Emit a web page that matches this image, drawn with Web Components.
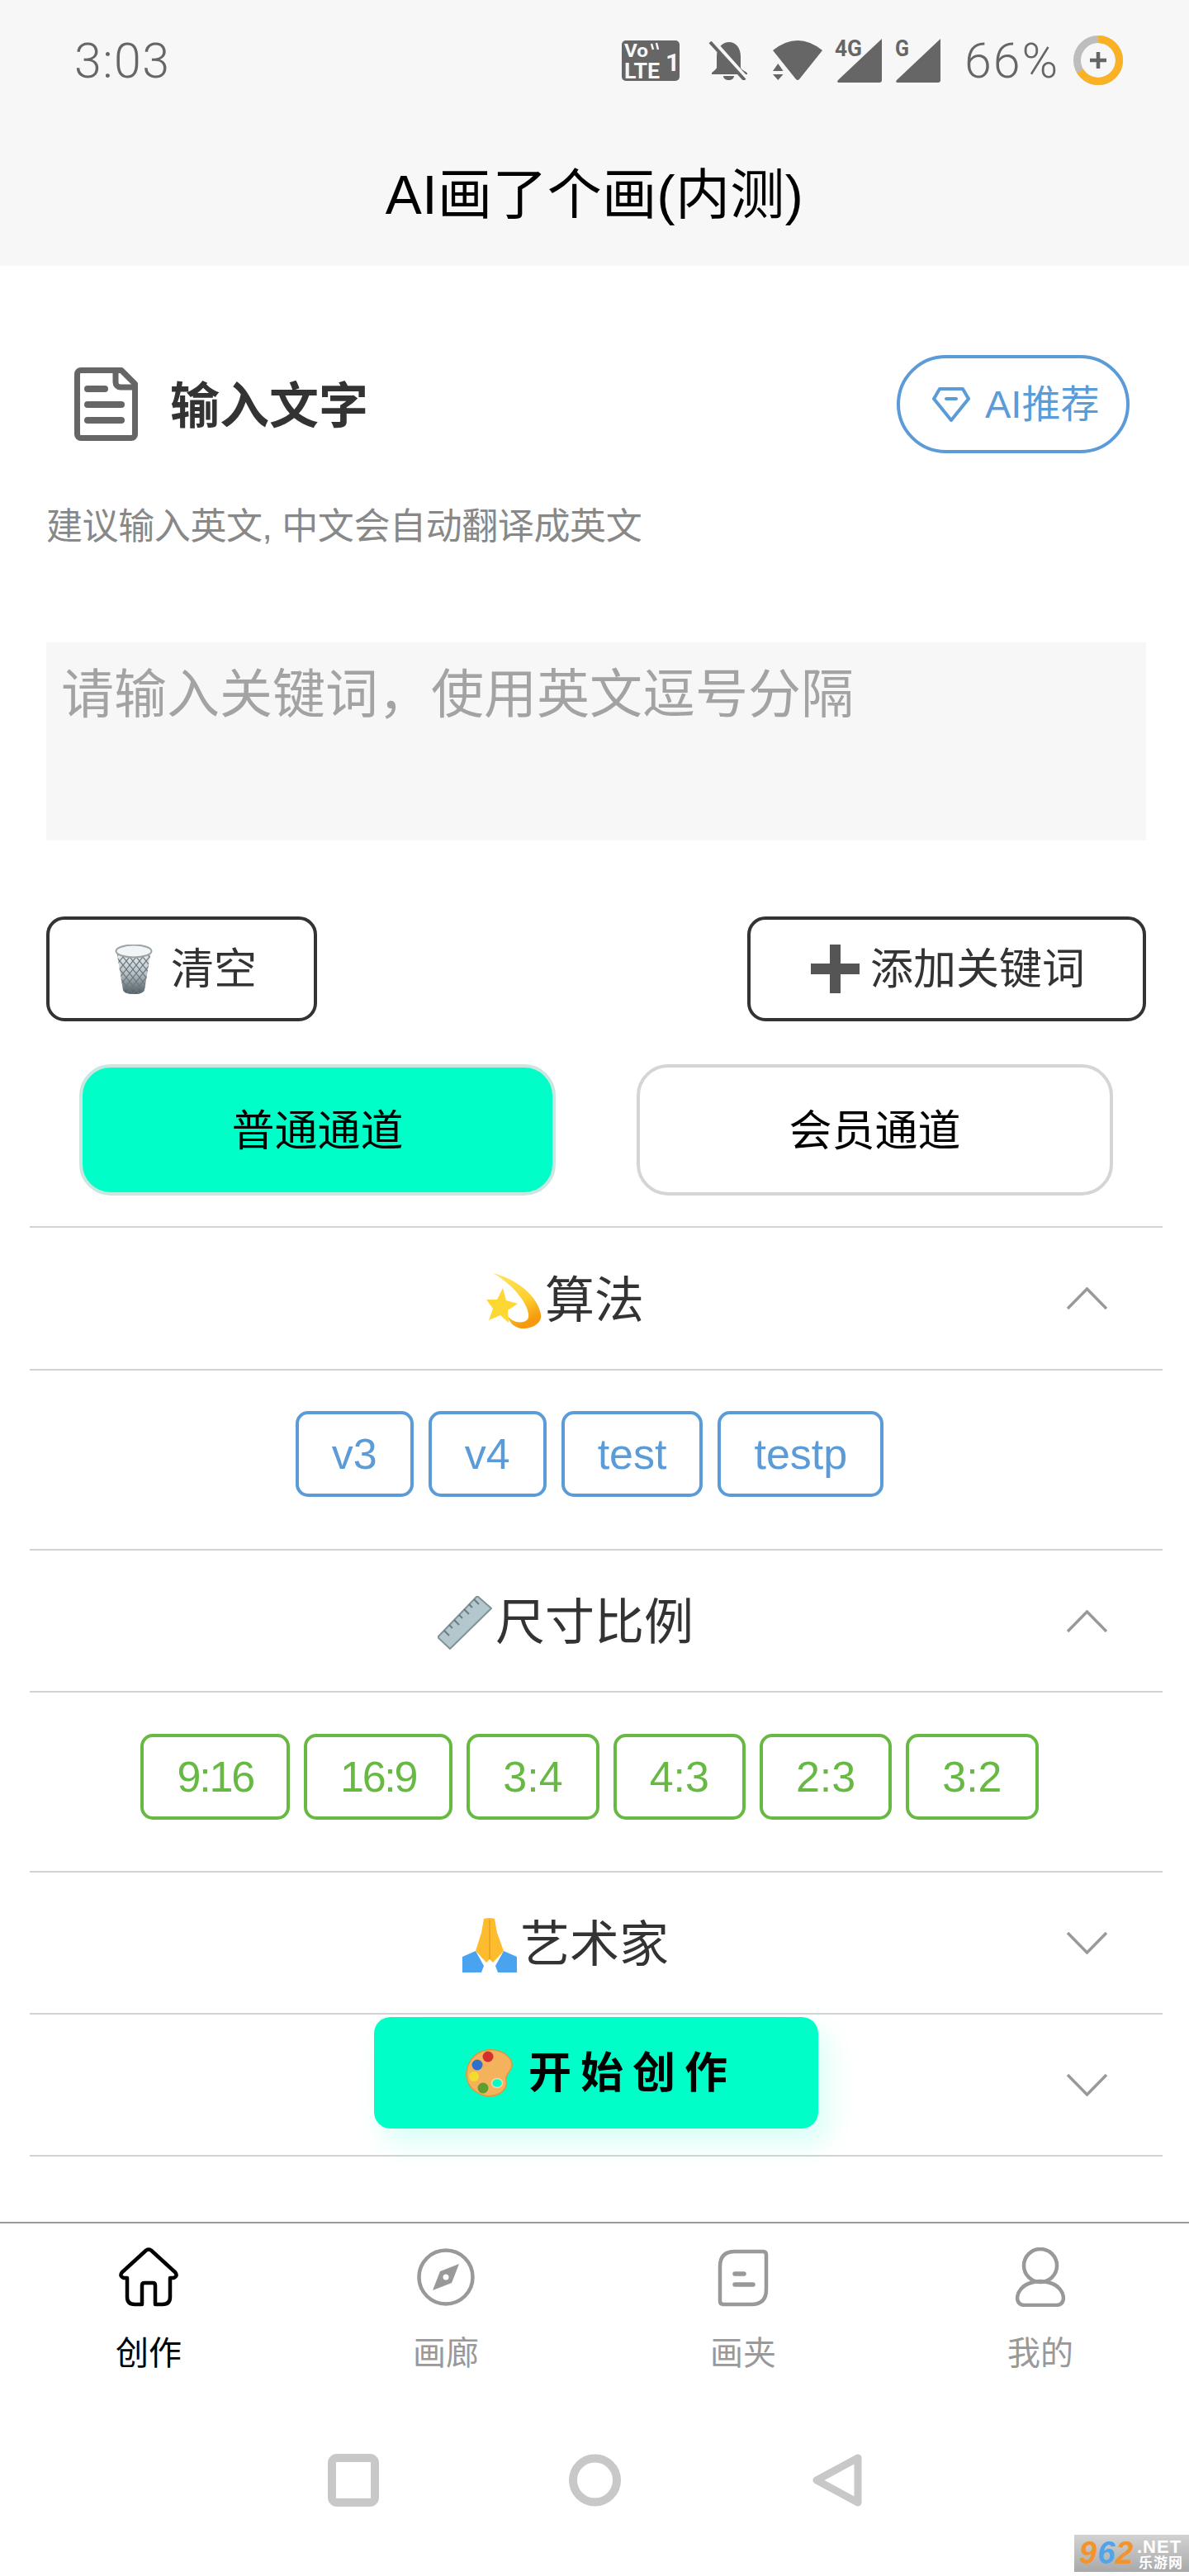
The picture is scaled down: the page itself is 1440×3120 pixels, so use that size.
<!DOCTYPE html>
<html lang="zh">
<head>
<meta charset="utf-8">
<title>AI画了个画(内测)</title>
<style>
html,body{margin:0;padding:0;background:#fff}
body{font-family:"Liberation Sans","Noto Sans CJK SC",sans-serif;color:#333}
svg{display:block;flex:none}
</style>
</head>
<body>
<template id="t-screen"><style>
:host{display:block;position:relative;width:1440px;height:3120px;overflow:hidden;background:#fff}
</style><slot></slot></template>

<template id="t-header"><style>
:host{display:block;height:322px;background:#f7f7f7}
.status{height:146px;display:flex;align-items:center;box-sizing:border-box;padding:0 80px 0 90px;color:#666;font-family:Roboto,"Liberation Sans",sans-serif;font-weight:300;font-size:59px}
.time{flex:1;letter-spacing:1.500px}
.title{height:176px;box-sizing:border-box;display:flex;align-items:center;justify-content:center;padding-top:3px;font-size:66px;letter-spacing:.4px;color:#000;line-height:1;font-family:"Liberation Sans","Noto Sans CJK SC",sans-serif;font-weight:400}
::slotted(*){flex:none}
</style><div class="status"><span class="time"></span><slot name="status"></slot></div><div class="title"><slot></slot></div></template>

<template id="t-status-icons"><style>
:host{display:flex;align-items:center}
</style><slot></slot></template>

<template id="t-section-head"><style>
:host{display:flex;align-items:center;margin:108px 72px 0 90px;height:119px}
.t{flex:1;margin-left:39px;padding-top:6px;font-size:60px;font-weight:700;color:#333;line-height:1}
</style><slot name="icon"></slot><div class="t"><slot></slot></div><slot name="action"></slot></template>

<template id="t-pill"><style>
:host{display:flex;align-items:center;box-sizing:border-box;width:282px;height:119px;border:4px solid #5a9bd8;border-radius:60px;color:#5a9bd8;font-size:47px;padding-left:39px;gap:18px;line-height:1}
</style><slot name="icon"></slot><slot></slot></template>

<template id="t-hint"><style>
:host{display:block;margin:59px 0 0 56px;font-size:44px;letter-spacing:-.4px;line-height:60px;color:#888}
</style><slot></slot></template>

<template id="t-input"><style>
:host{display:block;box-sizing:border-box;margin:110px 52px 0 56px;height:240px;background:#f7f7f7;color:#a3a3a3;font-size:64px;line-height:90px;padding:18px 18px}
</style><slot></slot></template>

<template id="t-row"><style>
:host{display:flex;justify-content:space-between}
</style><slot></slot></template>

<template id="t-btn"><style>
:host{display:flex;align-items:center;box-sizing:border-box;height:127px;border:4px solid #333;border-radius:22px;color:#333;font-size:52px;line-height:1}
</style><slot name="icon"></slot><slot></slot></template>

<template id="t-channel"><style>
:host{display:flex;align-items:center;justify-content:center;box-sizing:border-box;width:577px;height:159px;padding-top:3px;border:4px solid #d5d5d5;border-radius:38px;color:#000;font-size:52px;line-height:1;background:#fff}
:host([on]){background:#00ffc8;border-color:#c9e6df}
</style><slot></slot></template>

<template id="t-panel"><style>
:host{display:block;border-bottom:2px solid #d3d3d3}
.h{display:flex;align-items:center;height:var(--hh,170px);padding:0 67px 0 38px}
.t{flex:1;display:flex;align-items:center;justify-content:center;padding-top:6px;font-size:60px;line-height:1;color:#333}
.c{display:flex;justify-content:center;gap:var(--g,18px);height:218px;box-sizing:border-box;padding:var(--pt,50px) 16px 0 0;border-top:2px solid #d3d3d3}
:host(:not([open])) .c{display:none}
.e{display:flex;width:74px;justify-content:center}
</style><div class="h"><div class="t"><span class="e"><slot name="emoji"></slot></span><slot name="label"></slot></div><slot name="chev"></slot></div><div class="c"><slot></slot></div></template>

<template id="t-chip"><style>
:host{display:flex;align-items:center;box-sizing:border-box;height:104px;padding:0 40px;border:4px solid var(--c,#5a9bd8);border-radius:15px;color:var(--c,#5a9bd8);font-size:52px;line-height:1;font-family:"Liberation Sans",sans-serif}
</style><slot></slot></template>

<template id="t-fab"><style>
:host{position:absolute;left:453px;top:2443px;width:538px;height:135px;box-sizing:border-box;display:flex;align-items:center;padding-left:111px;gap:19px;background:#00ffc8;border-radius:20px;box-shadow:12px 18px 34px rgba(0,255,200,.16);font-size:52px;font-weight:700;color:#000;letter-spacing:11px;line-height:1}
</style><slot name="icon"></slot><slot></slot></template>

<template id="t-tabbar"><style>
:host{display:grid;grid-template-columns:repeat(4,360px);margin-top:79px;border-top:2px solid #999;padding-top:29px}
</style><slot></slot></template>

<template id="t-tab"><style>
:host{display:flex;flex-direction:column;align-items:center;color:#999;font-size:40px;line-height:56px}
:host([on]){color:#000}
.l{margin-top:28px}
</style><slot name="icon"></slot><div class="l"><slot></slot></div></template>

<template id="t-sysnav"><style>
:host{display:flex;align-items:center;margin-top:94px;padding-left:397px}
</style><slot></slot></template>

<template id="t-mark"><style>
:host{position:absolute;left:1301px;top:3070px;width:139px;height:45px;background:linear-gradient(180deg,#d2d2d2,#a9a9a9);font-family:"Liberation Sans","Noto Sans CJK SC",sans-serif}
.n{position:absolute;left:6px;top:0;font-size:38px;line-height:44px;font-weight:700;font-style:italic;letter-spacing:1px}
.a{color:#f2932e}.b{color:#4fa5e8}
.net{position:absolute;left:76px;top:3px;font-size:22px;line-height:24px;color:#fff;font-weight:700;letter-spacing:1px}
.cn{position:absolute;left:78px;top:25px;font-size:17px;line-height:19px;color:#fff;font-weight:700;letter-spacing:1px}
</style><span class="n"><span class="a">9</span><span class="b">6</span><span class="a">2</span></span><span class="net">.NET</span><span class="cn">乐游网</span></template>

<template id="t-panels"><style>
:host{display:block;margin:37px 32px 0 36px;border-top:2px solid #d3d3d3}
</style><slot></slot></template>

<script>
const names=[['app-screen','t-screen'],['app-header','t-header'],['status-icons','t-status-icons'],['section-head','t-section-head'],['pill-button','t-pill'],['hint-text','t-hint'],['keyword-input','t-input'],['button-row','t-row'],['outline-button','t-btn'],['channel-button','t-channel'],['collapse-panel','t-panel'],['option-chip','t-chip'],['start-fab','t-fab'],['tab-bar','t-tabbar'],['tab-item','t-tab'],['system-nav','t-sysnav'],['water-mark','t-mark'],['panel-list','t-panels']];
for(const [n,t] of names){
  customElements.define(n,class extends HTMLElement{
    constructor(){super();const s=this.attachShadow({mode:'open'});s.appendChild(document.getElementById(t).content.cloneNode(true));
      if(n==='app-header'){s.querySelector('.time').textContent='3:03';}
    }
  });
}
</script>

<app-screen>
  <app-header>
    <status-icons slot="status">
      <svg width="70" height="49" viewBox="0 0 70 49" style="overflow:visible"><rect width="70" height="49" rx="5" fill="#666"/>
        <text x="3" y="20" font-family="Roboto,'Liberation Sans',sans-serif" font-weight="700" font-size="22" fill="#f7f7f7" textLength="29" lengthAdjust="spacingAndGlyphs">Vo</text>
        <text x="3" y="46" font-family="Roboto,'Liberation Sans',sans-serif" font-weight="700" font-size="26" fill="#f7f7f7" textLength="43" lengthAdjust="spacingAndGlyphs">LTE</text>
        <text x="53" y="37" font-family="Roboto,'Liberation Sans',sans-serif" font-weight="700" font-size="30" fill="#f7f7f7">1</text>
        <path d="M36 4l2 7M42 3l2 8" stroke="#f7f7f7" stroke-width="2.500" fill="none"/></svg>
      <svg width="48" height="47" viewBox="0 0 48 47" style="margin-left:35px"><path d="M4 39c0-2 5-4 6-7V18C10 8 17 1 25 1s14 7 14 17v14c1 3 8 5 8 7v1H4z" fill="#666"/><path d="M18 42h13c0 3-3 5-6.500 5S18 45 18 42z" fill="#666"/><path d="M6 0l42 47" stroke="#f7f7f7" stroke-width="5"/><path d="M2 1l42 46" stroke="#666" stroke-width="4"/></svg>
      <svg width="60" height="48" viewBox="0 0 60 48" style="margin-left:30px"><path d="M0 12Q30-12 60 12L32 47Q30 49 28 47Z" fill="#666"/><path d="M6.300 28L0 37H12.600ZM0 41H12.600L6.300 48Z" fill="#666"/></svg>
      <svg width="55" height="53" viewBox="0 0 55 53" style="margin-left:18px;overflow:visible"><path d="M54 0V50Q54 53 51 53H2Q-1 53 1 50Z" fill="#666"/><text x="-3" y="21" font-family="Roboto,'Liberation Sans',sans-serif" font-weight="700" font-size="27" fill="#666" textLength="33" lengthAdjust="spacingAndGlyphs">4G</text></svg>
      <svg width="55" height="53" viewBox="0 0 55 53" style="margin-left:16px;overflow:visible"><path d="M54 0V50Q54 53 51 53H2Q-1 53 1 50Z" fill="#666"/><text x="-1" y="21" font-family="Roboto,'Liberation Sans',sans-serif" font-weight="700" font-size="27" fill="#666" textLength="17" lengthAdjust="spacingAndGlyphs">G</text></svg>
      <span style="margin-left:28px;width:117px;font-size:59px;letter-spacing:2px">66%</span>
      <svg width="60" height="60" viewBox="0 0 60 60" style="margin-left:15px"><circle cx="30" cy="30" r="25.500" fill="none" stroke="#bdbdbd" stroke-width="9"/><circle cx="30" cy="30" r="25.500" fill="none" stroke="#fbb124" stroke-width="9" stroke-dasharray="105.700 160.200" transform="rotate(-90 30 30)"/><path d="M30 20v20M20 30h20" stroke="#666" stroke-width="4.500"/></svg>
    </status-icons>
    AI画了个画(内测)
  </app-header>

  <section-head>
    <svg slot="icon" width="77" height="89" viewBox="0 0 77 89"><path d="M8 3.500H57L73.500 20V81a4.500 4.500 0 0 1-4.500 4.500H8A4.500 4.500 0 0 1 3.500 81V8A4.500 4.500 0 0 1 8 3.500Z" fill="none" stroke="#666" stroke-width="7" stroke-linejoin="round"/><path d="M50 4V18a6 6 0 0 0 6 6H73" fill="none" stroke="#666" stroke-width="7"/><path d="M16 26H37M16 45H57M16 64H57" stroke="#666" stroke-width="8" stroke-linecap="round"/></svg>
    输入文字
    <pill-button slot="action">
      <svg slot="icon" width="46" height="44" viewBox="0 0 46 44"><path d="M9 3H37L44 15L23 41L2 15Z" fill="none" stroke="#5a9bd8" stroke-width="4" stroke-linejoin="round"/><path d="M17 15H29" stroke="#5a9bd8" stroke-width="4" stroke-linecap="round"/></svg>
      AI推荐
    </pill-button>
  </section-head>

  <hint-text>建议输入英文, 中文会自动翻译成英文</hint-text>
  <keyword-input>请输入关键词，使用英文逗号分隔</keyword-input>

  <button-row style="margin:92px 52px 0 56px">
    <outline-button style="padding:0 69px 0 77px">
      <svg slot="icon" width="50" height="60" viewBox="0 0 50 60" style="margin-right:20px">
        <defs>
          <linearGradient id="tg" x1="0" y1="0" x2="0" y2="1"><stop offset="0" stop-color="#f1f4f5"/><stop offset=".55" stop-color="#b4bec3"/><stop offset="1" stop-color="#4d5a60"/></linearGradient>
          <pattern id="mesh" width="8" height="10" patternUnits="userSpaceOnUse"><path d="M0 0L8 10M8 0L0 10" stroke="#6c787e" stroke-width="1.200" fill="none"/></pattern>
        </defs>
        <path d="M4 7L12 55Q13 60 25 60T38 55L46 7Z" fill="url(#tg)"/><path d="M4 7L12 55Q13 60 25 60T38 55L46 7Z" fill="url(#mesh)"/><ellipse cx="25" cy="8" rx="21.500" ry="7.500" fill="#f2f5f6" stroke="#9aa5aa" stroke-width="2"/></svg>
      清空
    </outline-button>
    <outline-button style="padding:0 70px 0 73px">
      <svg slot="icon" width="59" height="59" viewBox="0 0 59 59" style="margin-right:13px"><path d="M23 0H36V23H59V36H36V59H23V36H0V23H23Z" fill="#555"/></svg>
      添加关键词
    </outline-button>
  </button-row>

  <button-row style="margin:52px 92px 0 96px">
    <channel-button on>普通通道</channel-button>
    <channel-button>会员通道</channel-button>
  </button-row>

  <panel-list>
    <collapse-panel open style="--hh:171px;--pt:49px">
      <svg slot="emoji" width="68" height="68" viewBox="0 0 68 68"><defs><linearGradient id="dz" x1="0" y1="0" x2=".5" y2="1"><stop offset="0" stop-color="#ffe566"/><stop offset=".65" stop-color="#fdd030"/><stop offset="1" stop-color="#f59a0f"/></linearGradient></defs><path d="M8 0C34 6 62 26 66 50C68 60 56 68 42 67C34 66 26 58 26 52C32 60 44 62 50 56C56 48 40 18 8 0Z" fill="url(#dz)"/><path d="M20 18L24 33L38 37L26 45L27 60L17 51L3 57L8 43L0 32L13 32Z" fill="#fdd835"/></svg>
      <span slot="label">算法</span>
      <svg slot="chev" width="49" height="27" viewBox="0 0 49 27"><path d="M1 26L24.500 2L48 26" fill="none" stroke="#999" stroke-width="3.500"/></svg>
      <option-chip>v3</option-chip><option-chip>v4</option-chip><option-chip>test</option-chip><option-chip>testp</option-chip>
    </collapse-panel>
    <collapse-panel open style="--g:17px">
      <svg slot="emoji" width="66" height="66" viewBox="0 0 66 66"><path d="M0 50L48 0L65 15L15 64Z" fill="#b4c7cc" stroke="#7f9298" stroke-width="2" stroke-linejoin="round"/><path d="M44 4l6 6M38 10l4 4M32 16l6 6M26 23l4 4M20 29l6 6M14 35l4 4M8 42l6 6" stroke="#6b7d83" stroke-width="2"/></svg>
      <span slot="label">尺寸比例</span>
      <svg slot="chev" width="49" height="27" viewBox="0 0 49 27"><path d="M1 26L24.500 2L48 26" fill="none" stroke="#999" stroke-width="3.500"/></svg>
      <option-chip style="--c:#67b944;letter-spacing:-2.200px">9:16</option-chip><option-chip style="--c:#67b944;letter-spacing:-2.200px">16:9</option-chip><option-chip style="--c:#67b944">3:4</option-chip><option-chip style="--c:#67b944">4:3</option-chip><option-chip style="--c:#67b944">2:3</option-chip><option-chip style="--c:#67b944">3:2</option-chip>
    </collapse-panel>
    <collapse-panel>
      <svg slot="emoji" width="66" height="66" viewBox="0 0 66 66"><path d="M16 40L0 47V66H23L26 58ZM50 40L66 47V66H43L40 58Z" fill="#4aa3ee"/><path d="M26 1Q33-1 39 1L42 18L50 40L37 54L33 50L29 54L16 40L23 18Z" fill="#fdbb2e"/><path d="M33 2V50" stroke="#e9a020" stroke-width="1.500"/></svg>
      <span slot="label">艺术家</span>
      <svg slot="chev" width="49" height="27" viewBox="0 0 49 27"><path d="M1 1L24.500 25L48 1" fill="none" stroke="#999" stroke-width="3.500"/></svg>
    </collapse-panel>
    <collapse-panel>
      <svg slot="chev" width="49" height="27" viewBox="0 0 49 27"><path d="M1 1L24.500 25L48 1" fill="none" stroke="#999" stroke-width="3.500"/></svg>
    </collapse-panel>
  </panel-list>

  <start-fab>
    <svg slot="icon" width="57" height="58" viewBox="0 0 57 58"><path d="M26 1C44-1 57 10 56 20C55 28 47 30 49 38C51 45 46 52 38 55C22 61 3 50 1 33C0 18 10 3 26 1Z" fill="#f5b25d" stroke="#e2963c" stroke-width="1.500"/><circle cx="27" cy="9" r="6.500" fill="#d32f2f"/><circle cx="14" cy="19" r="6.500" fill="#2f6fd0"/><circle cx="10" cy="33" r="6" fill="#f4dc2c"/><circle cx="21" cy="47" r="6.500" fill="#5d9e2f"/><ellipse cx="38" cy="41" rx="6.500" ry="5.500" fill="#00ffc8" stroke="#f8d9a8" stroke-width="1.500"/></svg>
    开始创作
  </start-fab>

  <tab-bar>
    <tab-item on><svg slot="icon" width="74" height="72" viewBox="0 0 74 72"><path d="M34 3.500Q37 1.500 40 3.500L69 30Q73 35 67 37H63V60Q63 69 54 69H45V46Q45 43 42 43H32Q29 43 29 46V69H20Q11 69 11 60V37H7Q1 35 5 30Z" fill="none" stroke="#000" stroke-width="4.500" stroke-linejoin="round"/></svg>创作</tab-item>
    <tab-item><svg slot="icon" width="72" height="72" viewBox="0 0 72 72"><circle cx="36" cy="36" r="32.500" fill="none" stroke="#999" stroke-width="4.500"/><path d="M52 20L43 43L20 52L29 29Z" fill="#999"/><circle cx="36" cy="36" r="3.500" fill="#fff"/></svg>画廊</tab-item>
    <tab-item><svg slot="icon" width="60" height="72" viewBox="0 0 60 72" style="overflow:visible"><path d="M20 5H54Q58 5 58 9V51Q58 69 40 69H6Q2 69 2 65V23Q2 5 20 5Z" fill="none" stroke="#999" stroke-width="4.500"/><path d="M20 32H31M20 45H42" stroke="#999" stroke-width="5.500" stroke-linecap="round"/></svg>画夹</tab-item>
    <tab-item><svg slot="icon" width="60" height="72" viewBox="0 0 60 72"><circle cx="30" cy="22" r="20" fill="none" stroke="#999" stroke-width="4.500"/><path d="M18 43C8 46 2 54 2 62Q3 70 11 70H49Q57 70 58 62C58 54 52 46 42 43Q30 39 18 43Z" fill="none" stroke="#999" stroke-width="4.500"/></svg>我的</tab-item>
  </tab-bar>

  <system-nav>
    <svg width="62" height="64" viewBox="0 0 62 64"><rect x="5" y="5" width="52" height="54" rx="6" fill="none" stroke="#c8c8c8" stroke-width="10"/></svg>
    <svg width="63" height="64" viewBox="0 0 63 64" style="margin-left:230px"><circle cx="31.500" cy="32" r="26.500" fill="none" stroke="#c8c8c8" stroke-width="10"/></svg>
    <svg width="60" height="64" viewBox="0 0 60 64" style="margin-left:232px"><path d="M55 5V59L5 32Z" fill="none" stroke="#c8c8c8" stroke-width="9" stroke-linejoin="round"/></svg>
  </system-nav>

  <water-mark></water-mark>
</app-screen>
</body>
</html>
